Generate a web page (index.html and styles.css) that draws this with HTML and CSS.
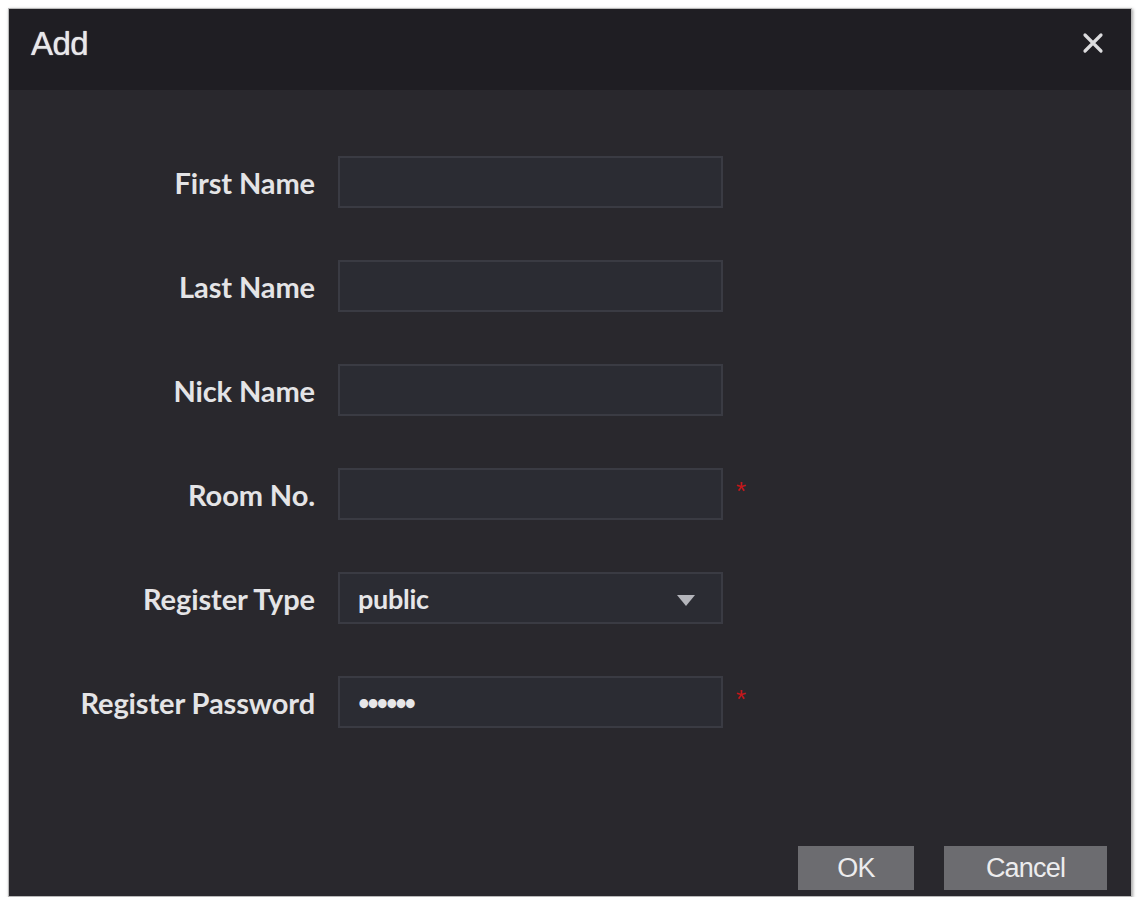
FILE: index.html
```html
<!DOCTYPE html>
<html lang="en">
<head>
    <meta charset="UTF-8">
    <title>Add</title>
    <link rel="stylesheet" href="styles.css">
</head>
<body>
    <div class="dialog">
        <div class="dialog-head">
            <h2>Add</h2>
            <svg class="close" width="22" height="22" viewBox="0 0 22 22">
                <path d="M3 3 L19 19 M19 3 L3 19" stroke="#dcdcde" stroke-width="3.2" stroke-linecap="round"/>
            </svg>
        </div>
        <div class="dialog-body">
            <div class="row">
                <label>First Name</label>
                <div class="field"></div>
            </div>
            <div class="row">
                <label>Last Name</label>
                <div class="field"></div>
            </div>
            <div class="row">
                <label>Nick Name</label>
                <div class="field"></div>
            </div>
            <div class="row">
                <label>Room No.</label>
                <div class="field"></div>
                <span class="req">*</span>
            </div>
            <div class="row">
                <label>Register Type</label>
                <div class="field select">
                    <span>public</span>
                    <span class="arrow"></span>
                </div>
            </div>
            <div class="row">
                <label>Register Password</label>
                <div class="field"><span class="dots">&bull;&bull;&bull;&bull;&bull;&bull;</span></div>
                <span class="req">*</span>
            </div>
        </div>
        <div class="dialog-foot">
            <button class="ok">OK</button>
            <button class="cancel">Cancel</button>
        </div>
    </div>
</body>
</html>
```

FILE: styles.css
```css
body {
    margin: 0;
    background: #ffffff;
    font-family: "Liberation Sans", Arial, sans-serif;
}

.dialog {
    margin: 8px 0 0 8px;
    width: 1122px;
    height: 887px;
    background: #29282d;
    border: 1px solid #b8b8b8;
    box-shadow: 1px 1px 3px rgba(0, 0, 0, 0.35);
    display: flex;
    flex-direction: column;
    color: #e6e6e8;
}

.dialog-head {
    height: 81px;
    background: #1f1e23;
    display: flex;
    align-items: flex-start;
    justify-content: space-between;
    padding: 0 27px 0 22px;
    box-sizing: border-box;
}
.dialog-head h2 {
    margin: 16px 0 0 0;
    font-size: 33px;
    font-weight: normal;
    letter-spacing: -0.5px;
    color: #e8e8ea;
    text-shadow: 0 0 1px #e8e8ea;
}
.close {
    margin-top: 23px;
}

.dialog-body {
    padding-top: 66px;
    display: flex;
    flex-direction: column;
    gap: 52px;
}
.row {
    display: grid;
    grid-template-columns: 306px 385px auto;
    column-gap: 23px;
    align-items: center;
    height: 52px;
}
.row label {
    text-align: right;
    font-family: "Lato", sans-serif;
    font-weight: bold;
    font-size: 29px;
    letter-spacing: -0.1px;
    color: #e4e4e6;
}
.field {
    height: 52px;
    box-sizing: border-box;
    background: #2b2c33;
    border: 2px solid #3a3b43;
    display: flex;
    align-items: center;
    padding: 0 20px 0 18px;
    font-family: "Lato", sans-serif;
    font-weight: bold;
    font-size: 27px;
    letter-spacing: -0.3px;
    color: #e6e6e8;
}
.select {
    justify-content: space-between;
}
.arrow {
    width: 0;
    height: 0;
    border-left: 9px solid transparent;
    border-right: 9px solid transparent;
    border-top: 11px solid #b4b5bb;
    margin-right: 6px;
    margin-top: 4px;
}
.dots {
    font-size: 20px;
    letter-spacing: -2.3px;
}
.req {
    color: #c4171a;
    font-size: 26px;
    margin-left: -10px;
    margin-top: -6px;
}

.dialog-foot {
    margin-top: auto;
    display: flex;
    justify-content: flex-end;
    gap: 30px;
    padding: 0 24px 6px 0;
}
.dialog-foot button {
    height: 44px;
    border: none;
    background: #6c6c70;
    color: #ececee;
    font-family: "Liberation Sans", Arial, sans-serif;
    font-size: 27px;
    letter-spacing: -0.8px;
}
.ok {
    width: 116px;
}
.cancel {
    width: 163px;
}
```
